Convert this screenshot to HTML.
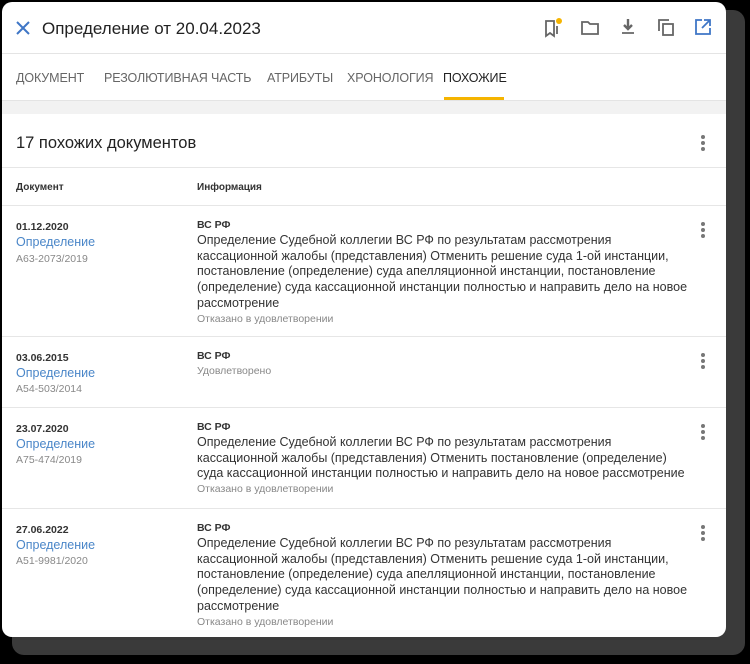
<!DOCTYPE html>
<html><head><meta charset="utf-8"><style>
*{margin:0;padding:0;box-sizing:border-box}
body{width:750px;height:664px;background:#000;position:relative;overflow:hidden;font-family:"Liberation Sans",Arial,sans-serif;color:#222}
.sh{position:absolute;left:12px;top:10px;width:733px;height:645px;background:#3a3a3a;border-radius:12px}
.card{position:absolute;left:2px;top:2px;width:724px;height:635px;background:#fff;border-radius:10px;overflow:hidden}
.hdr{position:absolute;left:0;top:0;width:100%;height:52px;border-bottom:1px solid #e4e4e4}
.title{position:absolute;left:40px;top:17px;font-size:17px;color:#222}
.tabs{position:absolute;top:53px;left:0;width:100%;height:46px;border-bottom:1px solid #e4e4e4}
.tab{position:absolute;top:16px;font-size:12.5px;color:#666;letter-spacing:-0.1px}
.band{position:absolute;top:99px;left:0;width:100%;height:13px;background:#f2f2f2}
.t17{position:absolute;left:14px;top:132px;font-size:16.5px;color:#222}
.l{position:absolute;left:0;width:100%;height:1px;background:#e6e6e6}
.ch{position:absolute;top:180px;font-size:10px;font-weight:bold;color:#333}
.row{position:absolute;left:0;width:100%}
.d{position:absolute;left:14px;font-size:10.5px;font-weight:bold;color:#333}
.lk{position:absolute;left:14px;font-size:12.5px;color:#4a86c8}
.n{position:absolute;left:14px;font-size:10.5px;color:#888}
.i{position:absolute;left:195px;width:500px;font-size:12.5px;line-height:15.7px;color:#333;white-space:nowrap}
.i b{display:block;font-size:10.5px;color:#333;line-height:15px}
.i s{text-decoration:none;display:block;font-size:10.5px;color:#888;line-height:14px}
.dots{position:absolute;left:699px;width:4px}
.dots i{display:block;width:4px;height:4px;border-radius:2px;background:#777;margin-bottom:2px}
</style></head><body>
<div class="sh"></div>
<div class="card">
<div class="hdr">
<svg style="position:absolute;left:14px;top:19px" width="14" height="14" viewBox="0 0 14 14"><path d="M1 1L13 13M13 1L1 13" stroke="#3f76c6" stroke-width="2"/></svg>
<div class="title">Определение от 20.04.2023</div>
<svg style="position:absolute;left:540px;top:14px" width="24" height="24" viewBox="0 0 24 24"><path d="M4 5h8v15l-4-3-4 3z" fill="none" stroke="#666" stroke-width="1.8"/><path d="M15 10v8" stroke="#666" stroke-width="1.8"/><circle cx="17" cy="5" r="3" fill="#f5b400"/></svg>
<svg style="position:absolute;left:578px;top:16px" width="20" height="20" viewBox="0 0 20 20"><path d="M2 4h6l2 2h8v10H2z" fill="none" stroke="#666" stroke-width="1.8"/></svg>
<svg style="position:absolute;left:616px;top:15px" width="20" height="20" viewBox="0 0 20 20"><path d="M10 2v9M6 8l4 4 4-4" fill="none" stroke="#666" stroke-width="2.4"/><path d="M4 16h12" stroke="#666" stroke-width="1.8"/></svg>
<svg style="position:absolute;left:654px;top:15px" width="20" height="20" viewBox="0 0 20 20"><path d="M3 14V3h10" fill="none" stroke="#666" stroke-width="1.8"/><rect x="7" y="7" width="10" height="11" fill="none" stroke="#666" stroke-width="1.8"/></svg>
<svg style="position:absolute;left:691px;top:15px" width="20" height="20" viewBox="0 0 20 20"><path d="M9 3H3v14h14v-6" fill="none" stroke="#3f76c6" stroke-width="1.8"/><path d="M11 3h6v6M17 3l-8 8" fill="none" stroke="#3f76c6" stroke-width="1.8"/></svg>
</div>
<div class="tabs">
<div class="tab" style="left:14px">ДОКУМЕНТ</div>
<div class="tab" style="left:102px">РЕЗОЛЮТИВНАЯ ЧАСТЬ</div>
<div class="tab" style="left:265px">АТРИБУТЫ</div>
<div class="tab" style="left:345px">ХРОНОЛОГИЯ</div>
<div class="tab" style="left:441px;color:#222">ПОХОЖИЕ</div>
<div style="position:absolute;left:442px;top:42px;width:60px;height:3px;background:#f5b400"></div>
</div>
<div class="band"></div>
<div class="t17">17 похожих документов</div>
<div class="dots" style="top:133px"><i></i><i></i><i></i></div>
<div class="l" style="top:165px"></div>
<div class="ch" style="left:14px">Документ</div>
<div class="ch" style="left:195px">Информация</div>
<div class="l" style="top:203px"></div>

<div class="row" style="top:203px">
<div class="d" style="top:16px">01.12.2020</div><div class="lk" style="top:30px">Определение</div><div class="n" style="top:48px">А63-2073/2019</div>
<div class="i" style="top:13px"><b>ВС РФ</b>Определение Судебной коллегии ВС РФ по результатам рассмотрения<br>кассационной жалобы (представления) Отменить решение суда 1-ой инстанции,<br>постановление (определение) суда апелляционной инстанции, постановление<br>(определение) суда кассационной инстанции полностью и направить дело на новое<br>рассмотрение<s>Отказано в удовлетворении</s></div>
<div class="dots" style="top:17px"><i></i><i></i><i></i></div>
</div>
<div class="l" style="top:334px"></div>
<div class="row" style="top:334px">
<div class="d" style="top:16px">03.06.2015</div><div class="lk" style="top:30px">Определение</div><div class="n" style="top:47px">А54-503/2014</div>
<div class="i" style="top:13px"><b>ВС РФ</b><s>Удовлетворено</s></div>
<div class="dots" style="top:17px"><i></i><i></i><i></i></div>
</div>
<div class="l" style="top:405px"></div>
<div class="row" style="top:405px">
<div class="d" style="top:16px">23.07.2020</div><div class="lk" style="top:30px">Определение</div><div class="n" style="top:47px">А75-474/2019</div>
<div class="i" style="top:13px"><b>ВС РФ</b>Определение Судебной коллегии ВС РФ по результатам рассмотрения<br>кассационной жалобы (представления) Отменить постановление (определение)<br>суда кассационной инстанции полностью и направить дело на новое рассмотрение<s>Отказано в удовлетворении</s></div>
<div class="dots" style="top:17px"><i></i><i></i><i></i></div>
</div>
<div class="l" style="top:506px"></div>
<div class="row" style="top:506px">
<div class="d" style="top:16px">27.06.2022</div><div class="lk" style="top:30px">Определение</div><div class="n" style="top:47px">А51-9981/2020</div>
<div class="i" style="top:13px"><b>ВС РФ</b>Определение Судебной коллегии ВС РФ по результатам рассмотрения<br>кассационной жалобы (представления) Отменить решение суда 1-ой инстанции,<br>постановление (определение) суда апелляционной инстанции, постановление<br>(определение) суда кассационной инстанции полностью и направить дело на новое<br>рассмотрение<s>Отказано в удовлетворении</s></div>
<div class="dots" style="top:17px"><i></i><i></i><i></i></div>
</div>
</div>
</body></html>
